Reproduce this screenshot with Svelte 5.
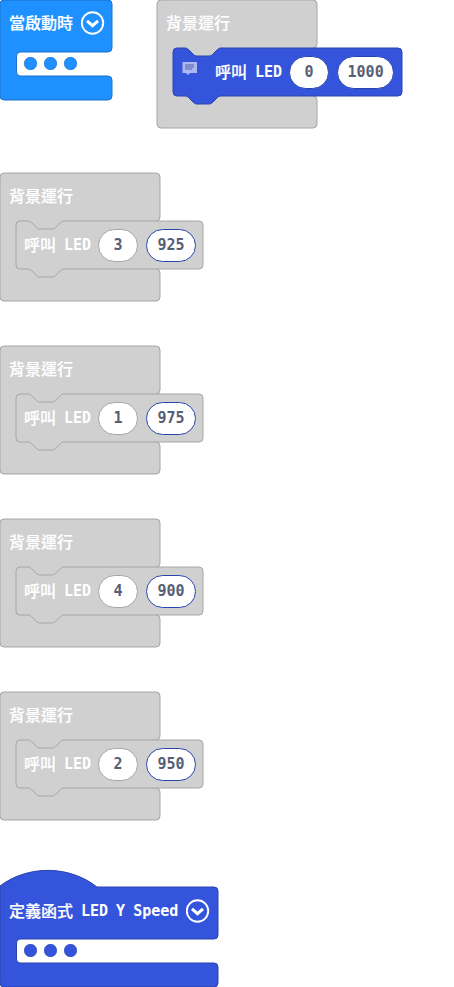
<script>
  const tasks = [
    { id: 'a', pin: 0, speed: 1000, active: true },
    { id: 'b', pin: 3, speed: 925 },
    { id: 'c', pin: 1, speed: 975 },
    { id: 'd', pin: 4, speed: 900 },
    { id: 'e', pin: 2, speed: 950 }
  ];

  // Statement block with a notch on top and a matching tab below.
  const statement = (w) =>
    `M0 4a4 4 0 0 1 4-4H12c2 0 3 1 4 2l4 4c1 1 2 2 4 2h12c2 0 3-1 4-2l4-4c1-1 2-2 4-2H${w - 4}a4 4 0 0 1 4 4V44a4 4 0 0 1-4 4H48c-2 0-3 1-4 2l-4 4c-1 1-2 2-4 2H24c-2 0-3-1-4-2l-4-4c-1-1-2-2-4-2H4a4 4 0 0 1-4-4z`;

  // Container with an open mouth on the right side.
  const mouth = (w, top, h) =>
    `M0 4a4 4 0 0 1 4-4H${w - 4}a4 4 0 0 1 4 4V${top - 4}a4 4 0 0 1-4 4H20a4 4 0 0 0-3.500 4V${h - 28}a4 4 0 0 0 3.500 4H${w - 4}a4 4 0 0 1 4 4V${h - 4}a4 4 0 0 1-4 4H4a4 4 0 0 1-4-4z`;

  const hat =
    'M0 16C28 -5 69 -5 97 17H214a4 4 0 0 1 4 4V65a4 4 0 0 1-4 4H20a4 4 0 0 0-3.500 4V89a4 4 0 0 0 3.500 4H214a4 4 0 0 1 4 4V113a4 4 0 0 1-4 4H4a4 4 0 0 1-4-4z';

  // Container around one call; the area behind the call's notch stays filled.
  const wrap =
    'M0 4a4 4 0 0 1 4-4H156a4 4 0 0 1 4 4V44a4 4 0 0 1-4 4V96a4 4 0 0 1 4 4V124a4 4 0 0 1-4 4H4a4 4 0 0 1-4-4z';
</script>

{#snippet chevron(label)}
  <button class="toggle" aria-label={label}>
    <svg width="24" height="24" viewBox="0 0 24 24" fill="none" stroke="#fff">
      <circle cx="11.500" cy="12" r="10.7" stroke-width="1.9" />
      <path d="M6 9.800l5.500 4.900L17 9.800" stroke-width="3" />
    </svg>
  </button>
{/snippet}

{#snippet dots()}
  <div class="dots"><i></i><i></i><i></i></div>
{/snippet}

{#snippet background(task)}
  <section class="task" class:active={task.active}>
    <svg class="shape outer" width="161" height="129" aria-hidden="true">
      <path d={wrap} />
    </svg>
    <header><span class="cjk">背景運行</span></header>
    <div class="call">
      <svg class="shape inner" width={task.active ? 229 : 187} height="58" aria-hidden="true">
        <path d={statement(task.active ? 229 : 187)} />
      </svg>
      {#if task.active}
        <button class="note" aria-label="註解">
          <svg width="16" height="16" viewBox="0 0 16 16">
            <path d="M1.500 2H16v11H9l-2 2-2-2H1.500z" fill="#adb8f0" />
            <path d="M4 4h9v4h-2v2H4z" fill="#7e8dce" />
          </svg>
        </button>
      {/if}
      <span class="cjk">呼叫</span>
      <span class="mono">LED</span>
      <input class="pin" aria-label="LED" value={task.pin} />
      <input class="speed" class:wide={task.speed > 999} aria-label="Speed" value={task.speed} />
    </div>
  </section>
{/snippet}

<main>
  <div class="row">
    <section class="start">
      <svg class="shape" width="113" height="101" aria-hidden="true"><path d={mouth(112, 52, 100)} /></svg>
      <header><span class="cjk">當啟動時</span>{@render chevron('收合')}</header>
      {@render dots()}
    </section>
    {@render background(tasks[0])}
  </div>

  {#each tasks.slice(1) as task (task.id)}
    {@render background(task)}
  {/each}

  <section class="define">
    <svg class="shape" width="219" height="118" aria-hidden="true"><path d={hat} /></svg>
    <header>
      <span class="cjk">定義函式</span>
      <span class="mono">LED</span>
      <span class="mono">Y</span>
      <span class="mono">Speed</span>
      {@render chevron('收合函式')}
    </header>
    {@render dots()}
  </section>
</main>

<style>
  :global(body) {
    background: #fff;
  }
  main {
    display: flex;
    flex-direction: column;
    align-items: flex-start;
    gap: 45px;
    color: #fff;
    font: 500 16px/24px 'Noto Sans CJK TC', sans-serif;
    white-space: nowrap;
  }
  .row {
    display: flex;
    align-items: flex-start;
    gap: 44px;
  }
  section,
  .call {
    position: relative;
    z-index: 0;
  }
  .shape {
    position: absolute;
    top: 0;
    left: 0;
    z-index: -1;
    overflow: visible;
  }
  header {
    display: flex;
    align-items: center;
    gap: 8px;
    height: 48px;
    padding: 0 0 2px 9px;
    box-sizing: border-box;
  }
  .cjk {
    padding-bottom: 3px;
  }
  .start .cjk,
  .call .cjk {
    font-weight: 500;
  }
  .mono {
    font: bold 15px/24px 'DejaVu Sans Mono', monospace;
  }
  button {
    display: flex;
    padding: 0;
    border: 0;
    background: none;
  }
  .start {
    width: 113px;
    height: 100px;
    --fill: #1e90ff;
  }
  .start .shape {
    fill: #1e90ff;
    stroke: #1873cc;
  }
  .dots {
    display: flex;
    gap: 7px;
    padding: 9px 0 0 24px;
  }
  .dots i {
    width: 13px;
    height: 13px;
    border-radius: 50%;
    background: var(--fill);
    box-shadow: inset 0 0 1px #1b3f8f;
  }
  .task {
    height: 128px;
  }
  .outer,
  .inner {
    fill: #d0d0d0;
    stroke: #a6a6a6;
  }
  .cjk {
    -webkit-text-stroke: 0.2px currentColor;
  }
  .call {
    display: flex;
    align-items: center;
    gap: 8px;
    width: max-content;
    height: 48px;
    margin-left: 16px;
    padding: 0 8px;
  }
  .active .inner {
    fill: #3455db;
    stroke: #2a44af;
  }
  .note {
    width: 26px;
    height: 24px;
  }
  input {
    box-sizing: border-box;
    height: 33px;
    margin: 0;
    padding: 0;
    border: 1px solid #2a44af;
    border-radius: 17px;
    background: #fff;
    color: #575e75;
    font: bold 15px/24px 'DejaVu Sans Mono', monospace;
    text-align: center;
  }
  .pin {
    width: 40px;
    margin-left: -1px;
    border-color: #a6a6a6;
  }
  .active .pin {
    border-color: #2a44af;
  }
  .speed {
    width: 50px;
  }
  .wide {
    width: 57px;
  }
  .define {
    width: 219px;
    height: 117px;
    margin-top: 5px;
    --fill: #3455db;
  }
  .define .shape {
    fill: #3455db;
    stroke: #2a44af;
  }
  .define header {
    height: 65px;
    padding-top: 17px;
    padding-bottom: 0;
  }
</style>
